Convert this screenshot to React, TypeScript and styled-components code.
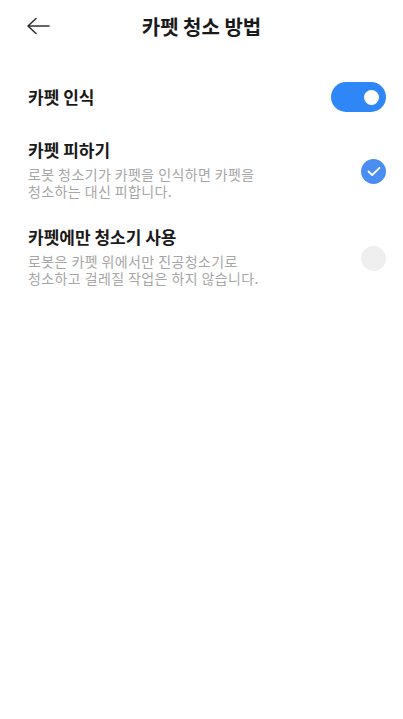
import React from "react";
import styled, { createGlobalStyle } from "styled-components";

const Global = createGlobalStyle`
  html, body { margin: 0; padding: 0; background: #fff; }
  body { font-family: "Noto Sans CJK KR", "Noto Sans", sans-serif; -webkit-font-smoothing: antialiased; }
  * { box-sizing: border-box; }
`;

const Page = styled.div`
  width: 403px;
  min-height: 719px;
  background: #ffffff;
  display: flex;
  flex-direction: column;
`;

const Header = styled.header`
  position: relative;
  height: 54px;
  display: flex;
  align-items: center;
  justify-content: center;
`;

const BackButton = styled.button`
  position: absolute;
  left: 24px;
  top: 14px;
  width: 28px;
  height: 24px;
  padding: 0;
  border: none;
  background: none;
  display: flex;
  align-items: center;
  justify-content: center;
`;

const Title = styled.h1`
  margin: 0;
  font-size: 20px;
  font-weight: 700;
  color: #1a1a1a;
  line-height: 1;
`;

const List = styled.div`
  display: flex;
  flex-direction: column;
  padding: 28px 17px 0 28px;
`;

const Row = styled.div<{ $mt: number }>`
  display: flex;
  align-items: center;
  justify-content: space-between;
  margin-top: ${(p) => p.$mt}px;
`;

const TextCol = styled.div`
  display: flex;
  flex-direction: column;
`;

const Label = styled.div`
  font-size: 17px;
  font-weight: 700;
  color: #1a1a1a;
  line-height: 24px;
`;

const Desc = styled.div`
  margin-top: 4px;
  font-size: 14px;
  letter-spacing: 0.4px;
  color: #a6a6a6;
  line-height: 17px;
  white-space: nowrap;
`;

const Toggle = styled.div<{ $on: boolean }>`
  width: 55px;
  height: 30px;
  border-radius: 15px;
  background: ${(p) => (p.$on ? "#2f86f6" : "#e5e5e5")};
  display: flex;
  align-items: center;
  justify-content: ${(p) => (p.$on ? "flex-end" : "flex-start")};
  padding: 0 7px;
`;

const Knob = styled.div`
  width: 15px;
  height: 15px;
  border-radius: 50%;
  background: #fff;
`;

const Radio = styled.div<{ $checked: boolean }>`
  width: 25px;
  height: 25px;
  margin-top: 4px;
  border-radius: 50%;
  background: ${(p) => (p.$checked ? "#4a8ef1" : "#efefef")};
  display: flex;
  align-items: center;
  justify-content: center;
  flex-shrink: 0;
`;

export default function App() {
  return (
    <Page>
      <Global />
      <Header>
        <BackButton aria-label="back">
          <svg width="24" height="18" viewBox="0 0 24 18" fill="none">
            <path d="M2 9H23M2 9L10 1.5M2 9L10 16.5" stroke="#333" strokeWidth="1.6" strokeLinecap="round" strokeLinejoin="round" />
          </svg>
        </BackButton>
        <Title>카펫 청소 방법</Title>
      </Header>
      <List>
        <Row $mt={0}>
          <Label>카펫 인식</Label>
          <Toggle $on>
            <Knob />
          </Toggle>
        </Row>
        <Row $mt={26}>
          <TextCol>
            <Label>카펫 피하기</Label>
            <Desc>
              로봇 청소기가 카펫을 인식하면 카펫을
              <br />
              청소하는 대신 피합니다.
            </Desc>
          </TextCol>
          <Radio $checked>
            <svg width="14" height="11" viewBox="0 0 14 11" fill="none">
              <path d="M1.5 5.5L5.2 9L12.5 1.8" stroke="#fff" strokeWidth="1.8" strokeLinecap="round" strokeLinejoin="round" />
            </svg>
          </Radio>
        </Row>
        <Row $mt={25}>
          <TextCol>
            <Label>카펫에만 청소기 사용</Label>
            <Desc>
              로봇은 카펫 위에서만 진공청소기로
              <br />
              청소하고 걸레질 작업은 하지 않습니다.
            </Desc>
          </TextCol>
          <Radio $checked={false} />
        </Row>
      </List>
    </Page>
  );
}
